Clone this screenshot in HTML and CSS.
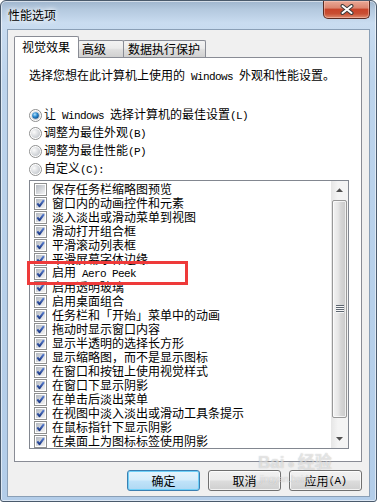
FILE: index.html
```html
<!DOCTYPE html>
<html lang="zh-CN">
<head>
<meta charset="utf-8">
<title>性能选项</title>
<link rel="stylesheet" href="styles.css">
</head>
<body>
<svg class="defs" width="0" height="0" aria-hidden="true">
  <defs>
    <linearGradient id="boxg" x1="0" y1="0" x2="1" y2="1">
      <stop offset="0" stop-color="#b4b9c0"/>
      <stop offset="1" stop-color="#f4f4f5"/>
    </linearGradient>
    <linearGradient id="checkg" x1="0" y1="0" x2="0" y2="1">
      <stop offset="0" stop-color="#5a7fd0"/>
      <stop offset="1" stop-color="#1c3a88"/>
    </linearGradient>
    <radialGradient id="radg" cx="0.35" cy="0.35" r="0.75">
      <stop offset="0" stop-color="#fbfbfb"/>
      <stop offset="1" stop-color="#c3c7cc"/>
    </radialGradient>
    <radialGradient id="dotg" cx="0.4" cy="0.35" r="0.7">
      <stop offset="0" stop-color="#b7e3fb"/>
      <stop offset="0.5" stop-color="#2b8ad0"/>
      <stop offset="1" stop-color="#0b4a88"/>
    </radialGradient>
    <linearGradient id="thumbg" x1="0" y1="0" x2="1" y2="0">
      <stop offset="0" stop-color="#f4f4f4"/>
      <stop offset="1" stop-color="#cfcfcf"/>
    </linearGradient>
    <symbol id="box" viewBox="0 0 13 13">
      <rect x="0.5" y="0.5" width="12" height="12" fill="#fff" stroke="#8e8f8f"/>
      <rect x="2" y="2" width="9" height="9" fill="url(#boxg)"/>
    </symbol>
    <symbol id="chk" viewBox="0 0 13 13">
      <rect x="0.5" y="0.5" width="12" height="12" fill="#fff" stroke="#8e8f8f"/>
      <rect x="2" y="2" width="9" height="9" fill="url(#boxg)"/>
      <path d="M3.3 6.3 L5.5 9.2 L9.9 3.2" fill="none" stroke="url(#checkg)" stroke-width="2.1" stroke-linejoin="round"/>
    </symbol>
    <symbol id="radio" viewBox="0 0 13 13">
      <circle cx="6.5" cy="6.5" r="6" fill="#fff" stroke="#8e8f8f"/>
      <circle cx="6.5" cy="6.5" r="4.6" fill="url(#radg)"/>
    </symbol>
    <symbol id="radioOn" viewBox="0 0 13 13">
      <circle cx="6.5" cy="6.5" r="6" fill="#fff" stroke="#8e8f8f"/>
      <circle cx="6.5" cy="6.5" r="4.6" fill="url(#radg)"/>
      <circle cx="6.5" cy="6.5" r="3.3" fill="url(#dotg)"/>
    </symbol>
  </defs>
</svg>

<div class="window">
  <div class="titlebar">
    <div class="title">性能选项</div>
    <div class="close">
      <svg width="14" height="11" viewBox="0 0 14 11">
        <path d="M2.5 2 L11.5 9 M11.5 2 L2.5 9" stroke="#3b3b3b" stroke-width="4" stroke-linecap="round"/>
        <path d="M2.5 2 L11.5 9 M11.5 2 L2.5 9" stroke="#ffffff" stroke-width="2" stroke-linecap="round"/>
      </svg>
    </div>
  </div>

  <div class="client">
    <div class="tabs">
      <div class="tab active">视觉效果</div>
      <div class="tab t2">高级</div>
      <div class="tab t3">数据执行保护</div>
    </div>

    <div class="panel">
      <p class="desc">选择您想在此计算机上使用的<span class="en"> Windows </span>外观和性能设置。</p>

      <div class="radios">
        <div class="radio"><svg class="rd"><use href="#radioOn"/></svg><span class="lbl">让<span class="en"> Windows </span>选择计算机的最佳设置<span class="en">(L)</span></span></div>
        <div class="radio"><svg class="rd"><use href="#radio"/></svg><span class="lbl">调整为最佳外观<span class="en">(B)</span></span></div>
        <div class="radio"><svg class="rd"><use href="#radio"/></svg><span class="lbl">调整为最佳性能<span class="en">(P)</span></span></div>
        <div class="radio"><svg class="rd"><use href="#radio"/></svg><span class="lbl">自定义<span class="en">(C):</span></span></div>
      </div>

      <div class="list">
        <div class="items">
          <div class="item"><svg class="cb"><use href="#box"/></svg><span>保存任务栏缩略图预览</span></div>
          <div class="item"><svg class="cb"><use href="#chk"/></svg><span>窗口内的动画控件和元素</span></div>
          <div class="item"><svg class="cb"><use href="#chk"/></svg><span>淡入淡出或滑动菜单到视图</span></div>
          <div class="item"><svg class="cb"><use href="#chk"/></svg><span>滑动打开组合框</span></div>
          <div class="item"><svg class="cb"><use href="#chk"/></svg><span>平滑滚动列表框</span></div>
          <div class="item"><svg class="cb"><use href="#chk"/></svg><span>平滑屏幕字体边缘</span></div>
          <div class="item"><svg class="cb"><use href="#chk"/></svg><span>启用<span class="en"> Aero Peek</span></span></div>
          <div class="item"><svg class="cb"><use href="#chk"/></svg><span>启用透明玻璃</span></div>
          <div class="item"><svg class="cb"><use href="#chk"/></svg><span>启用桌面组合</span></div>
          <div class="item"><svg class="cb"><use href="#chk"/></svg><span>任务栏和「开始」菜单中的动画</span></div>
          <div class="item"><svg class="cb"><use href="#chk"/></svg><span>拖动时显示窗口内容</span></div>
          <div class="item"><svg class="cb"><use href="#chk"/></svg><span>显示半透明的选择长方形</span></div>
          <div class="item"><svg class="cb"><use href="#chk"/></svg><span>显示缩略图，而不是显示图标</span></div>
          <div class="item"><svg class="cb"><use href="#chk"/></svg><span>在窗口和按钮上使用视觉样式</span></div>
          <div class="item"><svg class="cb"><use href="#chk"/></svg><span>在窗口下显示阴影</span></div>
          <div class="item"><svg class="cb"><use href="#chk"/></svg><span>在单击后淡出菜单</span></div>
          <div class="item"><svg class="cb"><use href="#chk"/></svg><span>在视图中淡入淡出或滑动工具条提示</span></div>
          <div class="item"><svg class="cb"><use href="#chk"/></svg><span>在鼠标指针下显示阴影</span></div>
          <div class="item"><svg class="cb"><use href="#chk"/></svg><span>在桌面上为图标标签使用阴影</span></div>
        </div>
        <div class="vscroll">
          <div class="sbtn"><svg width="7" height="4" viewBox="0 0 7 4"><path d="M0 4 L3.5 0.3 L7 4Z" fill="#505050"/></svg></div>
          <div class="thumb">
            <svg width="8" height="8" viewBox="0 0 8 8">
              <rect x="0" y="0" width="8" height="1" fill="#5d6670"/>
              <rect x="0" y="2" width="8" height="1" fill="#5d6670"/>
              <rect x="0" y="4" width="8" height="1" fill="#5d6670"/>
              <rect x="0" y="6" width="8" height="1" fill="#5d6670"/>
              <rect x="0" y="1" width="8" height="1" fill="#f7f7f7"/>
              <rect x="0" y="3" width="8" height="1" fill="#f7f7f7"/>
              <rect x="0" y="5" width="8" height="1" fill="#f7f7f7"/>
              <rect x="0" y="7" width="8" height="1" fill="#f7f7f7"/>
            </svg>
          </div>
          <div class="track"></div>
          <div class="sbtn"><svg width="7" height="4" viewBox="0 0 7 4"><path d="M0 0 L3.5 3.7 L7 0Z" fill="#505050"/></svg></div>
        </div>
        <div class="mark"></div>
      </div>
    </div>

    <div class="buttons">
      <div class="btn default">确定</div>
      <div class="btn">取消</div>
      <div class="btn">应用<span class="en">(A)</span></div>
    </div>
  </div>

  <div class="watermark"><span class="wm-big">Bai<span class="paw">●</span>经验</span><span class="wm-small">jingyan.baidu.com</span></div>
</div>
</body>
</html>
```

FILE: styles.css
```css
html, body {
  margin: 0;
  padding: 0;
  background: #ffffff;
}

body {
  width: 377px;
  height: 504px;
  overflow: hidden;
  font-family: "Noto Sans CJK SC", "Noto Sans", sans-serif;
  font-size: 12px;
  color: #000;
}

.defs {
  display: block;
  width: 0;
  height: 0;
  overflow: hidden;
}

.en {
  font-family: "Liberation Mono", "DejaVu Sans Mono", monospace;
  font-size: 11px;
  letter-spacing: -0.6px;
}

.window {
  position: relative;
  box-sizing: border-box;
  width: 377px;
  height: 502px;
  border: 1px solid #4a5a6c;
  border-radius: 6px 6px 3px 3px;
  padding: 0 6px 4px 6px;
  display: flex;
  flex-direction: column;
  background: linear-gradient(180deg, #9fb5cd 0px, #b3c8de 8px, #c9dcf0 22px, #bdd4ec 80px, #b7d0ea 300px, #b3cde9 100%);
  box-shadow: inset 0 0 0 1px rgba(255, 255, 255, 0.55);
}

.titlebar {
  height: 28px;
  flex: none;
  display: flex;
  justify-content: space-between;
  align-items: flex-start;
}

.title {
  padding: 7px 0 0 1px;
  line-height: 14px;
  font-size: 12px;
  color: #000;
  text-shadow: 0 0 4px #ffffff, 0 0 6px #ffffff;
}

.close {
  box-sizing: border-box;
  width: 47px;
  height: 18px;
  border: 1px solid #5a2b22;
  border-top: none;
  border-radius: 0 0 5px 5px;
  background: linear-gradient(180deg, #e9a896 0%, #dc8670 40%, #c8442a 50%, #c94f33 75%, #de8c70 100%);
  box-shadow: inset 0 0 0 1px rgba(255, 210, 200, 0.45);
  display: flex;
  align-items: center;
  justify-content: center;
}

.client {
  flex: 1;
  border: 1px solid #8a9fb6;
  background: #f0f0f0;
  padding: 6px 7px 5px 6px;
  display: flex;
  flex-direction: column;
}

.tabs {
  display: flex;
  align-items: flex-end;
  height: 22px;
  margin-bottom: -1px;
  position: relative;
  z-index: 1;
}

.tab {
  box-sizing: border-box;
  border: 1px solid #898c95;
  border-bottom: none;
  border-radius: 2px 2px 0 0;
  line-height: 14px;
  white-space: nowrap;
}

.tab.active {
  width: 65px;
  height: 22px;
  padding: 3px 0 0 7px;
  background: #ffffff;
  position: relative;
  z-index: 2;
}

.tab.t2,
.tab.t3 {
  height: 17px;
  margin-bottom: 1px;
  margin-left: -1px;
  padding-top: 1px;
  background: linear-gradient(180deg, #f3f3f3 0%, #ebebeb 45%, #dedede 55%, #d0d0d0 100%);
}

.tab.t2 {
  width: 46px;
  padding-left: 3px;
}

.tab.t3 {
  width: 83px;
  padding-left: 4px;
}

.panel {
  box-sizing: border-box;
  height: 405px;
  flex: none;
  border: 1px solid #898c95;
  background: #ffffff;
  padding: 10px 12px 0 14px;
}

.desc {
  margin: 0;
  line-height: 14px;
  white-space: nowrap;
}

.radios {
  margin-top: 22px;
}

.radio {
  height: 18px;
  display: flex;
  align-items: center;
}

.rd {
  width: 13px;
  height: 13px;
  flex: none;
}

.lbl {
  margin-left: 2px;
  line-height: 14px;
  white-space: nowrap;
}

.list {
  position: relative;
  box-sizing: border-box;
  margin-top: 2px;
  height: 269px;
  border: 1px solid #828790;
  background: #ffffff;
  display: flex;
}

.items {
  flex: 1;
  padding-top: 1px;
  overflow: hidden;
}

.item {
  height: 14px;
  display: flex;
  align-items: center;
  padding-left: 4px;
  line-height: 14px;
  white-space: nowrap;
}

.cb {
  width: 13px;
  height: 13px;
  flex: none;
  margin-right: 5px;
}

.vscroll {
  width: 17px;
  flex: none;
  display: flex;
  flex-direction: column;
  background: linear-gradient(90deg, #e6e6e6 0%, #f4f4f4 40%, #f4f4f4 100%);
}

.sbtn {
  height: 18px;
  flex: none;
  display: flex;
  align-items: center;
  justify-content: center;
}

.thumb {
  box-sizing: border-box;
  height: 218px;
  margin: 1px 1px 0 1px;
  flex: none;
  border: 1px solid #989898;
  border-radius: 2px;
  background: linear-gradient(90deg, #f3f3f3 0%, #e6e6e6 40%, #d6d6d6 60%, #cacaca 100%);
  box-shadow: inset 0 0 0 1px rgba(255, 255, 255, 0.7);
  display: flex;
  align-items: center;
  justify-content: center;
}

.track {
  flex: 1;
}

.mark {
  position: absolute;
  left: -3px;
  top: 80px;
  width: 161px;
  height: 24px;
  box-sizing: border-box;
  border: 3px solid #ee3a3a;
  z-index: 3;
}

.buttons {
  display: flex;
  justify-content: flex-end;
  gap: 8px;
  margin-top: 8px;
}

.btn {
  box-sizing: border-box;
  width: 73px;
  height: 21px;
  border: 1px solid #707070;
  border-radius: 3px;
  background: linear-gradient(180deg, #f2f2f2 0%, #ebebeb 48%, #dddddd 52%, #cfcfcf 100%);
  box-shadow: inset 0 0 0 1px rgba(255, 255, 255, 0.75);
  display: flex;
  align-items: center;
  justify-content: center;
  line-height: 14px;
  white-space: nowrap;
}

.btn.default {
  border-color: #3c7fb1;
  background: linear-gradient(180deg, #e6f4fc 0%, #d6edfb 48%, #c0e3f9 52%, #aed8f3 100%);
  box-shadow: inset 0 0 0 1px #6fd0f8;
}

.watermark {
  position: absolute;
  left: 257px;
  top: 452px;
  display: flex;
  flex-direction: column;
  align-items: flex-start;
  color: rgba(255, 255, 255, 0.55);
  text-shadow: 0 0 1px rgba(110, 110, 110, 0.45);
  pointer-events: none;
  z-index: 5;
}

.wm-big {
  font-family: "Liberation Sans", "Noto Sans CJK SC", sans-serif;
  font-size: 17px;
  font-weight: bold;
  line-height: 20px;
}

.paw {
  font-size: 12px;
  margin: 0 3px;
}

.wm-small {
  font-family: "Liberation Sans", sans-serif;
  font-size: 9px;
  line-height: 11px;
  margin-left: 2px;
}
```
